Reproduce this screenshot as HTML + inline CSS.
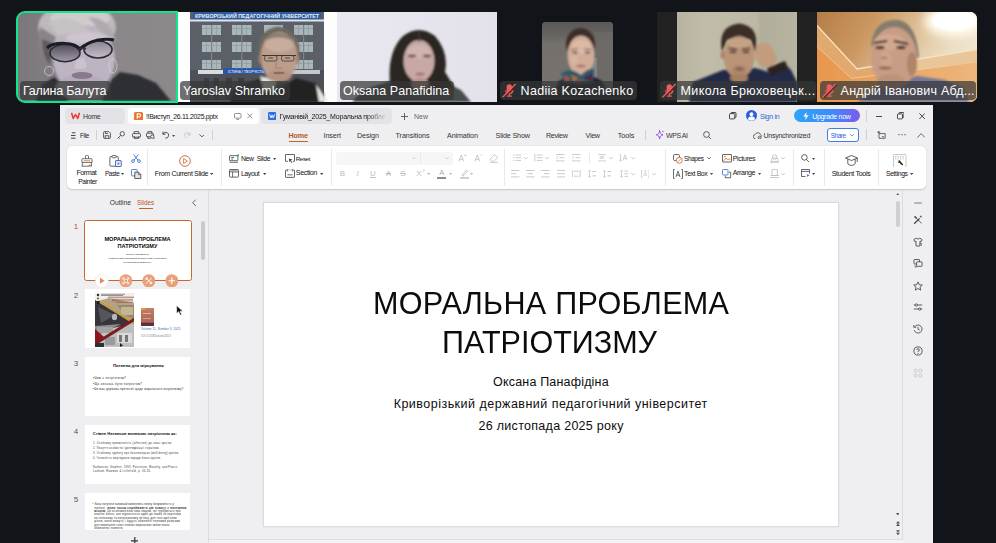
<!DOCTYPE html>
<html lang="uk">
<head>
<meta charset="utf-8">
<title>Zoom Meeting</title>
<style>
*{box-sizing:border-box;margin:0;padding:0}
html,body{width:996px;height:543px;overflow:hidden;background:#111418}
body{position:relative;font-family:"Liberation Sans",sans-serif;color:#222}
.abs{position:absolute}
/* video thumbs */
.thumb{position:absolute;top:12px;height:90px;width:160px;overflow:hidden}
.thumb svg{position:absolute;left:0;top:0;display:block}
.lbl{position:absolute;top:81px;height:19px;border-radius:4px;background:rgba(54,55,56,.72);color:#fff;font-size:12.5px;line-height:20.600px;white-space:nowrap;padding-left:3px}
.lbl.m{padding-left:20.600px}
.lbl svg{position:absolute;left:2px;top:1.800px}
/* window */
#win{position:absolute;left:60px;top:105px;width:873px;height:438px;background:#efeff1;overflow:hidden}
.t7{font-size:7.2px;color:#2b2b2b;white-space:nowrap;position:absolute;line-height:9px}
</style>
</head>
<body>
<!-- ===== video strip ===== -->
<div id="strip">
<!--T1s-->
<div class="abs" style="left:16px;top:11px;width:162px;height:92px;border:2px solid #0bea8a;border-radius:9px 0 0 9px;overflow:hidden;background:#858184">
<svg width="158" height="88" viewBox="0 0 158 88" style="display:block">
<defs>
<linearGradient id="g1bg" x1="0" x2="1"><stop offset="0" stop-color="#7b777c"/><stop offset=".5" stop-color="#8a8689"/><stop offset="1" stop-color="#8d898b"/></linearGradient>
<linearGradient id="g1l" x1="0" x2="0" y1="0" y2="1"><stop offset="0" stop-color="#4e4a56"/><stop offset="1" stop-color="#a49ca8"/></linearGradient>
<linearGradient id="g1r" x1="0" x2="0" y1="0" y2="1"><stop offset="0" stop-color="#8a8392"/><stop offset="1" stop-color="#c6bec8"/></linearGradient>
<filter id="b1" x="-20%" y="-20%" width="140%" height="140%"><feGaussianBlur stdDeviation="1.2"/></filter>
<filter id="b1s" x="-20%" y="-20%" width="140%" height="140%"><feGaussianBlur stdDeviation="0.55"/></filter>
</defs>
<rect width="158" height="88" fill="url(#g1bg)"/>
<g filter="url(#b1)">
<path d="M18 88 L24 72 L36 64 L46 72 L50 88Z" fill="#2b2b31"/>
<path d="M84 88 L94 66 L102 59 L120 62 L138 70 L153 88Z" fill="#2e2e35"/>
<ellipse cx="59" cy="14" rx="39" ry="25" fill="#bdb8ba"/>
<ellipse cx="62" cy="5" rx="30" ry="9" fill="#d0cccd"/>
<path d="M22 14 Q18 38 30 50 L38 24Z" fill="#8a838a"/>
<path d="M24 26 Q24 44 32 52 L34 30Z" fill="#5f595f"/>
<ellipse cx="66" cy="46" rx="31" ry="34" fill="#bdb4c2"/>
<ellipse cx="64" cy="74" rx="26" ry="12" fill="#b4aaba"/>
<ellipse cx="70" cy="25" rx="22" ry="6" fill="#cdc5d0"/>
<path d="M30 10 Q52 -2 72 18 Q60 22 40 22Z" fill="#c6c1c2"/>
<path d="M70 4 Q92 4 98 28 L84 20Z" fill="#b0aaae"/>
</g>
<g filter="url(#b1s)">
<ellipse cx="47" cy="40" rx="15" ry="8.700" fill="url(#g1l)" stroke="#2b2933" stroke-width="1.600"/>
<ellipse cx="80" cy="36.500" rx="14" ry="8.500" fill="url(#g1r)" stroke="#2b2933" stroke-width="1.600"/>
<path d="M29 35 Q34 30 47 30.500 Q58 31 62 36 Q68 30 80 27 Q90 25.500 96 27" fill="none" stroke="#1f1d27" stroke-width="3.200"/>
<path d="M60 37 Q64 34 68 36" fill="none" stroke="#34323c" stroke-width="1.600"/>
<path d="M59 46 L56 55 Q63 58 69 54 L66 45Z" fill="#cac2cf"/>
<ellipse cx="64" cy="62.500" rx="10.500" ry="3.400" fill="#88798f"/>
<circle cx="31" cy="58" r="4.500" fill="none" stroke="#d8d4dc" stroke-width=".7"/>
<ellipse cx="95" cy="53" rx="4" ry="7" fill="none" stroke="#d8d4dc" stroke-width=".7"/>
</g>
</svg>
</div>
<div class="lbl" style="left:20px;width:91px;letter-spacing:-.2px">Галина Балута</div>
<!--T1e-->
<!--T2s-->
<div class="thumb" style="left:178px;width:159px;background:#fdfdfd">
<svg width="159" height="90" viewBox="0 0 159 90">
<defs>
<filter id="b2" x="-20%" y="-20%" width="140%" height="140%"><feGaussianBlur stdDeviation="0.9"/></filter>
<filter id="b2s" x="-20%" y="-20%" width="140%" height="140%"><feGaussianBlur stdDeviation="0.45"/></filter>
</defs>
<rect x="12" y="0" width="134" height="90" fill="#5b5f67"/>
<rect x="12" y="58" width="134" height="32" fill="#4d5157"/>
<g filter="url(#b2s)" fill="#a9b7bb">
<rect x="24" y="13" width="19" height="10"/><rect x="54" y="13" width="19.500" height="10"/><rect x="86" y="13" width="19" height="8"/><rect x="116" y="13" width="19" height="10"/>
<rect x="24" y="30" width="19" height="10"/><rect x="54" y="30" width="19.500" height="10"/><rect x="116" y="30" width="19" height="10"/>
<rect x="24" y="48" width="19" height="9"/><rect x="54" y="48" width="19.500" height="9"/><rect x="116" y="48" width="19" height="9"/>
<rect x="20" y="58" width="25" height="4" fill="#d8dcde"/><rect x="100" y="58" width="42" height="4" fill="#c4c8cc"/>
<rect x="45" y="56" width="44" height="6" fill="#2b56a4"/>
<rect x="33" y="13" width="1.2" height="44" fill="#7d838a"/><rect x="63.200" y="13" width="1.200" height="44" fill="#7d838a"/><rect x="125" y="13" width="1.2" height="44" fill="#7d838a"/>
<path d="M24 16.5H43M28.5 13V23M38.5 13V23M24 33.5H43M28.5 30V40M38.5 30V40M24 51.5H43M28.5 48V57M38.5 48V57M54 16.5H73.5M58.5 13V23M68.5 13V23M54 33.5H73.5M58.5 30V40M68.5 30V40M54 51.5H73.5M58.5 48V57M68.5 48V57M116 16.5H135M120.5 13V23M130.5 13V23M116 33.5H135M120.5 30V40M130.5 30V40M116 51.5H135M120.5 48V57M130.5 48V57" stroke="#8d999e" stroke-width=".7" fill="none"/><g fill="#3a3d42"><rect x="26" y="66" width="5" height="22"/><rect x="36" y="66" width="5" height="22"/><rect x="48" y="66" width="6" height="22"/><rect x="60" y="66" width="6" height="22"/></g>
</g>
<rect x="15" y="0" width="128" height="7.5" fill="#2c5c9f"/>
<rect x="12" y="7.5" width="134" height="2" fill="#dfe6ee"/>
<text x="17" y="5.9" font-family="Liberation Sans,sans-serif" font-size="5.2" font-weight="700" fill="#e9eef6" textLength="124" lengthAdjust="spacingAndGlyphs">КРИВОРІЗЬКИЙ ПЕДАГОГІЧНИЙ УНІВЕРСИТЕТ</text>
<text x="50" y="60.8" font-family="Liberation Sans,sans-serif" font-size="3.2" font-weight="700" fill="#c9d6f0" textLength="36" lengthAdjust="spacingAndGlyphs">ІСТИНА І ТВОРЧІСТЬ</text>
<g filter="url(#b2)">
<path d="M52 90 L56 76 L84 66 L100 78 L118 66 L140 72 L146 82 L148 90Z" fill="#232323"/>
<path d="M82 64 L86 80 L96 76 L100 68Z" fill="#e2e0dc"/>
<path d="M138 72 L150 90 L141 90Z" fill="#e8e6e2"/>
<path d="M81 48 Q76 18 100 14.500 Q125 18 121 48 L117 34 Q100 24 85 34Z" fill="#6d685f"/>
<ellipse cx="101" cy="45" rx="18.500" ry="25" fill="#bb9d8c"/>
<ellipse cx="101" cy="33" rx="14" ry="7" fill="#c9ad9c"/>
<path d="M84 30 Q100 20 118 30 Q112 22 100 21 Q90 22 84 30Z" fill="#857e72"/>
<ellipse cx="82.500" cy="47" rx="2" ry="4.500" fill="#a4826f"/>
<ellipse cx="119.500" cy="47" rx="2" ry="4.500" fill="#a4826f"/>
<ellipse cx="101" cy="64" rx="12" ry="6" fill="#b3927f"/>
</g>
<g filter="url(#b2s)">
<path d="M84 43.500 L118 43.500" stroke="#3e352f" stroke-width="1"/>
<rect x="86.500" y="43.500" width="12.500" height="5.500" rx="2" fill="none" stroke="#3e352f" stroke-width=".8"/>
<rect x="103.500" y="43.500" width="12.500" height="5.500" rx="2" fill="none" stroke="#3e352f" stroke-width=".8"/>
<ellipse cx="92.500" cy="46" rx="3" ry="1" fill="#5a4a42" opacity=".6"/><ellipse cx="109.500" cy="46" rx="3" ry="1" fill="#5a4a42" opacity=".6"/>
<path d="M99 50 L97.500 56 H104" fill="none" stroke="#a07f6e" stroke-width=".8"/>
<ellipse cx="101" cy="61" rx="5.500" ry="1.200" fill="#8d6a5e"/>
</g>
</svg>
</div>
<div class="lbl" style="left:180px;width:110px;letter-spacing:0.05px">Yaroslav Shramko</div>
<!--T2e-->
<!--T3s-->
<div class="thumb" style="left:337px;background:#e6e4ee">
<svg width="160" height="90" viewBox="0 0 160 90">
<defs>
<filter id="b3" x="-20%" y="-20%" width="140%" height="140%"><feGaussianBlur stdDeviation="0.9"/></filter>
<linearGradient id="g3bg" x1="0" x2="1"><stop offset="0" stop-color="#e9e7f0"/><stop offset="1" stop-color="#e3e1ea"/></linearGradient>
</defs>
<rect width="160" height="90" fill="url(#g3bg)"/>
<g filter="url(#b3)">
<path d="M15 90 L26 78 L56 68 L104 68 L124 78 L134 90Z" fill="#464e48"/>
<path d="M53 72 Q50 40 66 24 Q82 12 98 24 Q112 40 108 60 L118 76 L88 82 L60 80 Z" fill="#2a2523"/>
<ellipse cx="82" cy="49" rx="15.5" ry="21" fill="#c7a8a6"/>
<ellipse cx="82" cy="40" rx="12" ry="7" fill="#d0b2ae"/>
<ellipse cx="83" cy="72" rx="9" ry="6" fill="#b8938e"/>
<path d="M82 18 L82 30" stroke="#4a3f3a" stroke-width="1"/>
</g>
<g filter="url(#b3)" opacity=".85">
<ellipse cx="75" cy="44" rx="4" ry="1.3" fill="#5a4644"/><ellipse cx="90" cy="44" rx="4" ry="1.3" fill="#5a4644"/>
<ellipse cx="83" cy="62" rx="4.5" ry="1.6" fill="#a06a6c"/>
</g>
</svg>
</div>
<div class="lbl" style="left:340px;width:114px;letter-spacing:0.04px">Oksana Panafidina</div>
<!--T3e-->
<!--T4s-->
<div class="abs" style="left:542px;top:22px;width:71px;height:71px;border-radius:4px;overflow:hidden;background:#6e6a66">
<svg width="71" height="71" viewBox="0 0 71 71" style="display:block">
<defs>
<filter id="b4" x="-20%" y="-20%" width="140%" height="140%"><feGaussianBlur stdDeviation="0.9"/></filter>
<linearGradient id="g4bg" x1="0" x2="0" y1="0" y2="1"><stop offset="0" stop-color="#595957"/><stop offset=".18" stop-color="#666461"/><stop offset=".3" stop-color="#74706b"/><stop offset="1" stop-color="#77726d"/></linearGradient>
</defs>
<rect width="71" height="71" fill="url(#g4bg)"/>
<rect x="52" y="10" width="19" height="61" fill="#6b6967" opacity=".8"/>
<rect x="50" y="36" width="5" height="20" fill="#8d8f96" opacity=".7"/>
<g filter="url(#b4)">
<path d="M12 71 L17 59 L30 53 L48 53 L60 59 L66 71Z" fill="#1f1f26"/>
<ellipse cx="38.500" cy="22" rx="14.500" ry="16" fill="#3d2f2a"/>
<ellipse cx="39" cy="33.500" rx="13.500" ry="20" fill="#d1ad98"/>
<ellipse cx="39" cy="25" rx="10" ry="7" fill="#dbb9a4"/>
<ellipse cx="32" cy="38" rx="4" ry="5" fill="#d8b5a0"/>
<path d="M19 52 Q28 44 39 53 Q48 45 52 47 L51 60 L38 62 L22 60Z" fill="#2d5a69"/>
<path d="M21 53 L28 56 L25 60Z" fill="#b8502a"/><path d="M41 56 L51 50 L50 60Z" fill="#4a2a48"/><path d="M29 53 L36 56 L32 60Z" fill="#b7702e"/><path d="M34 58 L42 58 L38 62Z" fill="#a03a2c"/>
</g>
<g filter="url(#b4)" opacity=".8">
<path d="M29 27.500L36 27M42 27L49 27.500" stroke="#5a4238" stroke-width=".9"/>
<ellipse cx="33" cy="30.500" rx="2.700" ry="1.100" fill="#4a4a52"/><ellipse cx="45.500" cy="30.500" rx="2.700" ry="1.100" fill="#4a4a52"/>
<ellipse cx="39" cy="44" rx="4.500" ry="1.300" fill="#a8605a"/>
</g>
</svg>
</div>
<div class="lbl m" style="left:500px;width:137px;letter-spacing:0.3px"><svg width="15" height="15" viewBox="0 0 15 15"><rect x="4.600" y="1.200" width="5.400" height="8.200" rx="2.700" fill="#ef5a5a"/><path d="M3.700 7.200a3.600 3.600 0 0 0 7.200 0M7.300 10.800v2M4.700 13.200h5.200" fill="none" stroke="#ef5a5a" stroke-width="1.300"/><path d="M1.700 15L14.800 1.700" stroke="#2b2d2e" stroke-width="1.200"/><path d="M.6 14.300L13.700 1" stroke="#ef5a5a" stroke-width="1.400"/></svg>Nadiia Kozachenko</div>
<!--T4e-->
<!--T5s-->
<div class="thumb" style="left:657px;background:#222">
<svg width="160" height="90" viewBox="0 0 160 90">
<defs>
<filter id="b5" x="-20%" y="-20%" width="140%" height="140%"><feGaussianBlur stdDeviation="1"/></filter>
<linearGradient id="g5bg" x1="0" x2="1"><stop offset="0" stop-color="#b7b3a1"/><stop offset=".25" stop-color="#c0bca9"/><stop offset=".66" stop-color="#bcb8a5"/><stop offset=".7" stop-color="#b2ae9c"/><stop offset="1" stop-color="#b7b3a1"/></linearGradient>
</defs>
<rect x="20" y="0" width="120" height="90" fill="url(#g5bg)"/>
<g filter="url(#b5)">
<path d="M32 90 L36 70 L66 58 L98 56 L118 62 L140 70 L140 90Z" fill="#202a47"/>
<path d="M110 58 L126 50 L134 58 L140 70 L118 66Z" fill="#202a47"/>
<path d="M98 34 Q108 28 114 34 L120 46 L116 56 L104 54 L98 46Z" fill="#c39b7d"/>
<path d="M110 56 L128 49 L131 56 L114 64Z" fill="#2b221d"/>
<path d="M65 40 Q60 14 82 11.500 Q104 14 98 40 L94 28 Q82 22 70 28Z" fill="#3b2f25"/>
<ellipse cx="82" cy="45" rx="15.500" ry="21" fill="#b99478"/>
<ellipse cx="82" cy="31" rx="11.500" ry="5" fill="#c6a285"/>
<ellipse cx="65.500" cy="43" rx="1.800" ry="4" fill="#a98268"/>
<ellipse cx="82" cy="66" rx="9" ry="5" fill="#a67f63"/>
<ellipse cx="82" cy="58" rx="8" ry="5" fill="#ac876c"/>
</g>
<g filter="url(#b5)" opacity=".8">
<path d="M72 36.500 L80 37.500M85 37.500 L93 36.500" stroke="#3a2c22" stroke-width="1.500"/>
<ellipse cx="76" cy="40" rx="3.500" ry="1.100" fill="#3f3026"/><ellipse cx="89" cy="40" rx="3.500" ry="1.100" fill="#3f3026"/>
<ellipse cx="82.500" cy="57" rx="4" ry="1.500" fill="#7f5446"/>
</g>
</svg>
</div>
<div class="lbl m" style="left:660px;width:156px;letter-spacing:.35px"><svg width="15" height="15" viewBox="0 0 15 15"><rect x="4.600" y="1.200" width="5.400" height="8.200" rx="2.700" fill="#ef5a5a"/><path d="M3.700 7.200a3.600 3.600 0 0 0 7.200 0M7.300 10.800v2M4.700 13.200h5.200" fill="none" stroke="#ef5a5a" stroke-width="1.300"/><path d="M1.700 15L14.800 1.700" stroke="#2b2d2e" stroke-width="1.200"/><path d="M.6 14.300L13.700 1" stroke="#ef5a5a" stroke-width="1.400"/></svg>Микола Брюховецьк...</div>
<!--T5e-->
<!--T6s-->
<div class="thumb" style="left:817px;border-radius:0 7px 7px 0;background:#d9a878">
<svg width="160" height="90" viewBox="0 0 160 90">
<defs>
<filter id="b6" x="-20%" y="-20%" width="140%" height="140%"><feGaussianBlur stdDeviation="1"/></filter>
<filter id="b6l" x="-50%" y="-50%" width="200%" height="200%"><feGaussianBlur stdDeviation="5"/></filter>
<linearGradient id="g6bg" x1="0" x2="1" y1="0" y2=".35"><stop offset="0" stop-color="#b47d47"/><stop offset=".35" stop-color="#cc9862"/><stop offset=".62" stop-color="#dfc099"/><stop offset=".85" stop-color="#eadcc0"/><stop offset="1" stop-color="#efe6d0"/></linearGradient>
<linearGradient id="g6w" x1="0" x2="1"><stop offset="0" stop-color="#e8974e"/><stop offset=".4" stop-color="#e9a45f"/><stop offset="1" stop-color="#ecb67c"/></linearGradient>
</defs>
<rect width="160" height="90" fill="url(#g6bg)"/>
<path d="M0 13.500 L40 57 L160 37.500 L160 90 L0 90Z" fill="#e2a96e"/>
<path d="M96 48 L160 37.500 L160 50 L96 59.500Z" fill="#e9c597"/>
<path d="M0 34.500 L34.500 66.500 L96 59.500 L160 50 L160 90 L0 90Z" fill="url(#g6w)"/>
<path d="M0 13.500 L40 57 L160 37.500" fill="none" stroke="#f6e2c2" stroke-width="1.300"/>
<path d="M0 34.500 L34.500 66.500 L160 50" fill="none" stroke="#f0c898" stroke-width=".9"/>
<ellipse cx="137" cy="9" rx="30" ry="16" fill="#fffaea" filter="url(#b6l)"/>
<ellipse cx="137" cy="8.500" rx="22" ry="10.500" fill="#ffffff" filter="url(#b6)"/>
<g filter="url(#b6)">
<path d="M40 90 L60 76 L100 64 L128 68 L146 76 L152 90Z" fill="#74779a"/>
<path d="M54 32 Q58 6 82 8 Q100 12 102 46 L94 42 Q90 18 72 18 Q60 20 56 36Z" fill="#857c6c"/>
<ellipse cx="77" cy="46" rx="23" ry="31" fill="#c79d86"/>
<ellipse cx="72" cy="30" rx="15" ry="8" fill="#d2a990"/>
<ellipse cx="69" cy="47" rx="6" ry="8" fill="#d0a48c"/>
<ellipse cx="95" cy="52" rx="5" ry="12" fill="#b1846c"/>
<ellipse cx="74" cy="70" rx="14" ry="8" fill="#bd927a"/>
</g>
<g filter="url(#b6)" opacity=".85">
<path d="M57 31 L70 29" stroke="#3c2e28" stroke-width="1.800"/><path d="M77 29 L91 32" stroke="#3c2e28" stroke-width="1.800"/>
<ellipse cx="63" cy="35.500" rx="4.500" ry="1.500" fill="#3e2e28"/><ellipse cx="84" cy="35.500" rx="4.500" ry="1.500" fill="#3e2e28"/>
<ellipse cx="68" cy="56" rx="6.500" ry="1.500" fill="#8a5c50"/>
<ellipse cx="67" cy="46" rx="3.500" ry="1.200" fill="#a87a68"/>
</g>
</svg>
</div>
<div class="lbl m" style="left:820px;width:156px;letter-spacing:.2px"><svg width="15" height="15" viewBox="0 0 15 15"><rect x="4.600" y="1.200" width="5.400" height="8.200" rx="2.700" fill="#ef5a5a"/><path d="M3.700 7.200a3.600 3.600 0 0 0 7.200 0M7.300 10.800v2M4.700 13.200h5.200" fill="none" stroke="#ef5a5a" stroke-width="1.300"/><path d="M1.700 15L14.800 1.700" stroke="#2b2d2e" stroke-width="1.200"/><path d="M.6 14.300L13.700 1" stroke="#ef5a5a" stroke-width="1.400"/></svg>Андрій Іванович Абд...</div>
<!--T6e-->

</div>
<!-- ===== shared window ===== -->
<div id="win">
<!--TABSs-->
<div class="abs" style="left:5.0px;top:3.0px;width:60px;height:16px;background:#e3e3e7;border-radius:4px"></div>
<svg class="abs" style="left:11.0px;top:7.0px;" width="9" height="8" viewBox="0 0 9 8"><path d="M.5 .8L2.300 6.500L4.500 2.500L6.700 6.500L8.500 .8" fill="none" stroke="#e8352e" stroke-width="1.500" stroke-linejoin="round"/></svg>
<span class="t7" style="left:23.0px;top:6.8px;font-size:7.0px;color:#333;letter-spacing:-0.358px;">Home</span>
<div class="abs" style="left:68.0px;top:3.0px;width:131px;height:15.6px;background:#ffffff;border-radius:4px"></div>
<svg class="abs" style="left:74.0px;top:6.5px;" width="9" height="8.5" viewBox="0 0 9 8.5"><rect width="9" height="8.500" rx="1.500" fill="#f0732a"/><path d="M3.200 6.800V1.900h1.900a1.500 1.500 0 0 1 0 3H3.200" fill="none" stroke="#fff" stroke-width="1.100"/></svg>
<span class="t7" style="left:86.0px;top:6.8px;font-size:6.99px;color:#161616;letter-spacing:-0.348px;">!!Виступ_26.11.2025.pptx</span>
<svg class="abs" style="left:174.0px;top:7.5px;" width="7.5" height="7" viewBox="0 0 7.5 7"><rect x=".5" y=".5" width="6.500" height="4.600" rx=".8" fill="none" stroke="#777" stroke-width=".8"/><path d="M2.500 6.500h2.500" stroke="#777" stroke-width=".8"/></svg>
<svg class="abs" style="left:187.0px;top:8.3px;" width="5.6" height="5.6" viewBox="0 0 5.6 5.6"><path d="M.4 .4L5.200 5.200M5.200 .4L.4 5.200" stroke="#777" stroke-width=".8"/></svg>
<div class="abs" style="left:201.0px;top:3.0px;width:131px;height:16px;background:#e3e3e7;border-radius:4px"></div>
<svg class="abs" style="left:207.7px;top:6.7px;" width="8.2" height="8.2" viewBox="0 0 8.2 8.2"><rect width="8.200" height="8.200" rx="1.400" fill="#2f6fe4"/><path d="M1.600 2.300L2.900 6L4.100 3L5.300 6L6.600 2.300" fill="none" stroke="#fff" stroke-width=".9" stroke-linejoin="round"/></svg>
<span class="t7" style="left:219.6px;top:6.6px;font-size:7.0px;color:#161616;letter-spacing:-0.196px;width:107px;overflow:hidden;-webkit-mask-image:linear-gradient(90deg,#000 82%,transparent 100%);mask-image:linear-gradient(90deg,#000 82%,transparent 100%);">Гуманівій_2025_Моральна пробле</span>
<svg class="abs" style="left:340.5px;top:7.5px;" width="7" height="7" viewBox="0 0 7 7"><path d="M3.500 0V7M0 3.500H7" stroke="#555" stroke-width=".9"/></svg>
<span class="t7" style="left:354.0px;top:6.8px;font-size:7.0px;color:#666;letter-spacing:-0.002px;">New</span>
<svg class="abs" style="left:669.0px;top:7.4px;" width="7.5" height="7.5" viewBox="0 0 7.5 7.5"><rect x=".5" y="1.600" width="5.300" height="5.300" rx=".8" fill="none" stroke="#333" stroke-width=".9"/><path d="M1.900 1.600V1.200a.7 .7 0 0 1 .7-.7h3.700a.7 .7 0 0 1 .7 .7v3.700a.7 .7 0 0 1-.7 .7H5.800" fill="none" stroke="#333" stroke-width=".9"/></svg>
<svg class="abs" style="left:686.0px;top:5.3px;" width="11" height="11" viewBox="0 0 11 11"><circle cx="5.500" cy="5.500" r="5.500" fill="#2b5fd9"/><circle cx="5.500" cy="4.200" r="1.900" fill="#fff"/><path d="M1.900 9.200a3.700 3.700 0 0 1 7.200 0a5.400 5.400 0 0 1-7.200 0z" fill="#fff"/></svg>
<span class="t7" style="left:700.0px;top:6.8px;font-size:7.0px;color:#2e63d6;letter-spacing:-0.301px;">Sign in</span>
<div class="abs" style="left:734.0px;top:4.0px;width:66px;height:13px;background:linear-gradient(90deg,#2fa4fb 0%,#3d8cf8 55%,#7a5cf0 100%);border-radius:6.5px"></div>
<svg class="abs" style="left:743.0px;top:6.5px;" width="6" height="8" viewBox="0 0 6 8"><path d="M3.600 0L.3 4.600H2.700L2.100 8L5.700 3.200H3.200Z" fill="#fff"/></svg>
<span class="t7" style="left:752.2px;top:6.8px;font-size:7.0px;color:#ffffff;letter-spacing:-0.304px;">Upgrade now</span>
<div class="abs" style="left:805.5px;top:5.0px;width:1px;height:12px;background:#d4d4d8;"></div>
<svg class="abs" style="left:815.5px;top:10.5px;" width="6" height="1" viewBox="0 0 6 1"><path d="M0 .5H6" stroke="#333" stroke-width=".9"/></svg>
<svg class="abs" style="left:837.0px;top:7.3px;" width="7.4" height="7.4" viewBox="0 0 7.4 7.4"><rect x=".5" y="1.900" width="5" height="5" rx=".7" fill="none" stroke="#333" stroke-width=".9"/><path d="M2 1.900V1.200a.7 .7 0 0 1 .7-.7h3.500a.7 .7 0 0 1 .7 .7v3.500a.7 .7 0 0 1-.7 .7H5.500" fill="none" stroke="#333" stroke-width=".9"/></svg>
<svg class="abs" style="left:859.0px;top:8.0px;" width="6.4" height="6.4" viewBox="0 0 6.4 6.4"><path d="M.4 .4L6 6M6 .4L.4 6" stroke="#333" stroke-width=".9"/></svg>
<!--TABSe-->
<!--MENUs-->
<svg class="abs" style="left:11.0px;top:26.5px;" width="5" height="7" viewBox="0 0 5 7"><path d="M.8 .8H4.500M0 3.500H4.500M0 6.200H4.500" stroke="#333" stroke-width=".9"/></svg>
<span class="t7" style="left:20.1px;top:25.8px;font-size:6.34px;color:#222;letter-spacing:-0.339px;">File</span>
<div class="abs" style="left:36.0px;top:25.0px;width:1px;height:10px;background:#d0d0d4;"></div>
<svg class="abs" style="left:43.0px;top:26.0px;" width="8" height="8" viewBox="0 0 8 8"><path d="M.6 1.400a.8 .8 0 0 1 .8-.8H5.800L7.400 2.200V6.600a.8 .8 0 0 1-.8 .8H1.400a.8 .8 0 0 1-.8-.8Z" fill="none" stroke="#3a3a3a" stroke-width=".8"/><path d="M2.200 7.400V4.700H5.800V7.400M2.400 .7V2.500H5" fill="none" stroke="#3a3a3a" stroke-width=".8"/></svg>
<svg class="abs" style="left:57.0px;top:26.0px;" width="8" height="8" viewBox="0 0 8 8"><circle cx="5.300" cy="2.800" r="2.200" fill="none" stroke="#3a3a3a" stroke-width=".8"/><path d="M3.700 4.400L.6 7.500M1.500 6.600L2.600 7.600" fill="none" stroke="#3a3a3a" stroke-width=".8"/></svg>
<svg class="abs" style="left:71.5px;top:26.0px;" width="9" height="8" viewBox="0 0 9 8"><rect x=".5" y="2.600" width="8" height="3.600" rx=".8" fill="none" stroke="#3a3a3a" stroke-width=".8"/><path d="M2.200 2.600V.6H6.800V2.600M2.200 5V7.400H6.800V5" fill="none" stroke="#3a3a3a" stroke-width=".8"/></svg>
<svg class="abs" style="left:85.5px;top:26.0px;" width="9" height="8" viewBox="0 0 9 8"><rect x=".5" y="2.200" width="6.800" height="3.600" rx=".8" fill="none" stroke="#3a3a3a" stroke-width=".8"/><path d="M1.900 2.200V.6H5.900V2.200M1.900 5V7.400H4.500" fill="none" stroke="#3a3a3a" stroke-width=".8"/><circle cx="6.300" cy="5.600" r="1.700" fill="#efeff1" stroke="#3a3a3a" stroke-width=".8"/><path d="M7.500 6.800L8.600 7.900" stroke="#3a3a3a" stroke-width=".8"/></svg>
<svg class="abs" style="left:101.5px;top:26.3px;" width="7" height="7.5" viewBox="0 0 7 7.5"><path d="M1 .6L.9 3.300L3.600 3.100" fill="none" stroke="#3a3a3a" stroke-width=".85"/><path d="M1.100 3.100A2.900 2.900 0 1 1 3.300 7.100" fill="none" stroke="#3a3a3a" stroke-width=".85"/></svg>
<svg class="abs" style="left:112.4px;top:29.5px;" width="3.2" height="2" viewBox="0 0 3.2 2"><path d="M0 0H3.200L1.600 2Z" fill="#555"/></svg>
<svg class="abs" style="left:123.5px;top:26.8px;" width="7" height="6.5" viewBox="0 0 7 6.5"><path d="M6 .6L6.100 3.100L3.600 2.900" fill="none" stroke="#c4c4c8" stroke-width=".85"/><path d="M5.900 2.900A2.700 2.700 0 1 0 3.800 6" fill="none" stroke="#c4c4c8" stroke-width=".85"/></svg>
<svg class="abs" style="left:138.6px;top:29.0px;" width="5.8" height="3.4" viewBox="0 0 5.8 3.4"><path d="M.4 .4L2.900 2.900L5.400 .4" fill="none" stroke="#444" stroke-width=".85"/></svg>
<div class="abs" style="left:152.0px;top:25.0px;width:1px;height:10px;background:#d0d0d4;"></div>
<span class="t7" style="left:228.6px;top:25.8px;font-size:7.2px;color:#b5562a;letter-spacing:-0.201px;font-weight:700;">Home</span>
<div class="abs" style="left:228.6px;top:36.3px;width:19.6px;height:1.2px;background:#c4622f;"></div>
<span class="t7" style="left:263.6px;top:25.8px;font-size:7.2px;color:#333;letter-spacing:-0.121px;">Insert</span>
<span class="t7" style="left:297.0px;top:25.8px;font-size:7.2px;color:#333;letter-spacing:-0.083px;">Design</span>
<span class="t7" style="left:335.6px;top:25.8px;font-size:7.2px;color:#333;letter-spacing:-0.095px;">Transitions</span>
<span class="t7" style="left:387.0px;top:25.8px;font-size:7.2px;color:#333;letter-spacing:-0.127px;">Animation</span>
<span class="t7" style="left:435.6px;top:25.8px;font-size:7.2px;color:#333;letter-spacing:-0.180px;">Slide Show</span>
<span class="t7" style="left:486.0px;top:25.8px;font-size:7.2px;color:#333;letter-spacing:-0.322px;">Review</span>
<span class="t7" style="left:525.6px;top:25.8px;font-size:7.2px;color:#333;letter-spacing:-0.359px;">View</span>
<span class="t7" style="left:557.7px;top:25.8px;font-size:7.2px;color:#333;letter-spacing:-0.027px;">Tools</span>
<div class="abs" style="left:585.3px;top:25.0px;width:1px;height:10px;background:#d0d0d4;"></div>
<svg class="abs" style="left:595.5px;top:25.2px;" width="8.5" height="9.5" viewBox="0 0 8.5 9.5"><path d="M3.600 .5C3.900 3.300 4.700 4.300 7 4.800C4.700 5.300 3.900 6.300 3.600 9C3.300 6.300 2.500 5.300 .3 4.800C2.500 4.300 3.300 3.300 3.600 .5Z" fill="none" stroke="#8a3fe0" stroke-width=".9" stroke-linejoin="round"/><path d="M6.900 .4L7.200 1.300L8.100 1.600L7.200 1.900L6.900 2.800L6.600 1.900L5.700 1.600L6.600 1.300Z" fill="#d64bd0"/></svg>
<span class="t7" style="left:606.0px;top:25.8px;font-size:7.0px;color:#333;letter-spacing:-0.424px;">WPS AI</span>
<svg class="abs" style="left:642.5px;top:25.8px;" width="8.5" height="8.5" viewBox="0 0 8.5 8.5"><circle cx="3.500" cy="3.500" r="2.900" fill="none" stroke="#444" stroke-width=".85"/><path d="M5.600 5.600L8.200 8.200" stroke="#444" stroke-width=".85"/></svg>
<svg class="abs" style="left:692.5px;top:26.5px;" width="9.5" height="7.5" viewBox="0 0 9.5 7.5"><path d="M2.400 6.600A2 2 0 0 1 2.200 2.600A2.800 2.800 0 0 1 7.600 2.900A1.700 1.700 0 0 1 8.800 4.500" fill="none" stroke="#444" stroke-width=".8"/><circle cx="6.600" cy="5.600" r="1.500" fill="none" stroke="#444" stroke-width=".8"/><path d="M5.600 6.600L7.600 4.600" stroke="#444" stroke-width=".6"/></svg>
<span class="t7" style="left:703.5px;top:25.8px;font-size:7.0px;color:#333;letter-spacing:-0.261px;">Unsynchronized</span>
<div class="abs" style="left:767.0px;top:23.0px;width:31.5px;height:14px;background:#fff;border:1px solid #3f7de0;border-radius:3px"></div>
<span class="t7" style="left:770.7px;top:25.8px;font-size:6.45px;color:#2e63d6;letter-spacing:-0.428px;">Share</span>
<svg class="abs" style="left:790.3px;top:29.1px;" width="4" height="2.6" viewBox="0 0 4 2.6"><path d="M.3 .3L2 2.100L3.700 .3" fill="none" stroke="#4a78d8" stroke-width=".8"/></svg>
<div class="abs" style="left:806.0px;top:24.0px;width:1px;height:11px;background:#d0d0d4;"></div>
<svg class="abs" style="left:817.0px;top:26.0px;" width="9.5" height="8" viewBox="0 0 9.5 8"><path d="M2 2.600H8.200V7.300H2Z" fill="none" stroke="#444" stroke-width=".8"/><path d="M.3 1.200H3.200M1.700 0V2.500M5 5.700H7" stroke="#444" stroke-width=".8"/></svg>
<svg class="abs" style="left:837.5px;top:29.4px;" width="8" height="1.4" viewBox="0 0 8 1.4"><circle cx=".9" cy=".7" r=".65" fill="#444"/><circle cx="4" cy=".7" r=".65" fill="#444"/><circle cx="7.100" cy=".7" r=".65" fill="#444"/></svg>
<svg class="abs" style="left:857.0px;top:27.5px;" width="8.4" height="5" viewBox="0 0 8.4 5"><path d="M.4 4.600L4.200 .6L8 4.600" fill="none" stroke="#555" stroke-width=".85"/></svg>
<!--MENUe-->
<!--RIBBONs-->
<div class="abs" style="left:7.0px;top:41.0px;width:859px;height:43px;background:#ffffff;border-radius:5px;box-shadow:0 .5px 1.500px rgba(0,0,0,.18)"></div>
<div class="abs" style="left:86.8px;top:44.0px;width:1px;height:37px;background:#e9e9ec;"></div>
<div class="abs" style="left:161.2px;top:44.0px;width:1px;height:37px;background:#e9e9ec;"></div>
<div class="abs" style="left:271.0px;top:44.0px;width:1px;height:37px;background:#e9e9ec;"></div>
<div class="abs" style="left:444.2px;top:44.0px;width:1px;height:37px;background:#e9e9ec;"></div>
<div class="abs" style="left:605.3px;top:44.0px;width:1px;height:37px;background:#e9e9ec;"></div>
<div class="abs" style="left:733.0px;top:44.0px;width:1px;height:37px;background:#e9e9ec;"></div>
<div class="abs" style="left:764.4px;top:44.0px;width:1px;height:37px;background:#e9e9ec;"></div>
<div class="abs" style="left:818.2px;top:44.0px;width:1px;height:37px;background:#e9e9ec;"></div>
<div class="abs" style="left:528.8px;top:48.0px;width:1px;height:10px;background:#e6e6ea;"></div>
<svg class="abs" style="left:21.0px;top:49.5px;" width="12" height="12" viewBox="0 0 12 12"><path d="M4.500 3.600V1.300a.8 .8 0 0 1 .8-.8h1.400a.8 .8 0 0 1 .8 .8v2.300" fill="none" stroke="#4a4a4a" stroke-width=".8"/><path d="M1.600 3.700H10.400a.7 .7 0 0 1 .7 .7V7.400H.9V4.400a.7 .7 0 0 1 .7-.7Z" fill="none" stroke="#4a4a4a" stroke-width=".8"/><path d="M1.600 7.400L1 11.200H8.200L8.600 9.800L9.200 11.200H10.400L10.400 7.400" fill="none" stroke="#4a4a4a" stroke-width=".8" stroke-linejoin="round"/><path d="M2.800 5.700H9.200" stroke="#e0703a" stroke-width=".8"/></svg>
<span class="t7" style="left:16.4px;top:64.3px;font-size:7.16px;color:#141414;letter-spacing:-0.455px;">Format</span>
<span class="t7" style="left:18.2px;top:72.3px;font-size:6.73px;color:#141414;letter-spacing:-0.354px;">Painter</span>
<svg class="abs" style="left:48.5px;top:49.5px;" width="13" height="12" viewBox="0 0 13 12"><rect x=".9" y="1.600" width="8.400" height="9.600" rx=".8" fill="none" stroke="#4a4a4a" stroke-width=".85"/><rect x="3" y=".5" width="4.200" height="2.200" rx=".5" fill="#fff" stroke="#4a4a4a" stroke-width=".8"/><rect x="6.600" y="5.600" width="5.600" height="6" rx=".4" fill="#fff" stroke="#3d5fc4" stroke-width="1"/><rect x="8.200" y="7.200" width="2.400" height="2.800" fill="#9aa4c8"/></svg>
<span class="t7" style="left:45.0px;top:64.3px;font-size:6.43px;color:#141414;letter-spacing:-0.411px;">Paste</span>
<svg class="abs" style="left:61.4px;top:68.3px;" width="3.2" height="2" viewBox="0 0 3.2 2"><path d="M0 0H3.200L1.600 2Z" fill="#444"/></svg>
<svg class="abs" style="left:71.0px;top:48.5px;" width="10" height="9" viewBox="0 0 10 9"><path d="M2.600 .4L7.200 6.400M7.400 .4L2.800 6.400" stroke="#3a6fd8" stroke-width=".85"/><circle cx="2" cy="7.100" r="1.400" fill="none" stroke="#3a6fd8" stroke-width=".85"/><circle cx="8" cy="7.100" r="1.400" fill="none" stroke="#3a6fd8" stroke-width=".85"/></svg>
<svg class="abs" style="left:71.0px;top:63.5px;" width="10.5" height="10" viewBox="0 0 10.5 10"><rect x=".5" y=".5" width="5.600" height="6.400" rx=".7" fill="none" stroke="#3a6fd8" stroke-width=".85"/><path d="M3.800 3.200H7.600L9.800 5.400V9.500H3.800Z" fill="#e4e4e4" stroke="#444" stroke-width=".85" stroke-linejoin="round"/><path d="M7.400 3.400V5.600H9.600" fill="none" stroke="#444" stroke-width=".7"/></svg>
<svg class="abs" style="left:118.5px;top:49.5px;" width="12" height="12" viewBox="0 0 12 12"><circle cx="6" cy="6" r="5.300" fill="none" stroke="#b3643a" stroke-width=".9"/><path d="M4.600 3.500L8.400 6L4.600 8.500Z" fill="none" stroke="#e8703a" stroke-width=".9" stroke-linejoin="round"/></svg>
<span class="t7" style="left:94.8px;top:64.3px;font-size:7.06px;color:#141414;letter-spacing:-0.349px;">From Current Slide</span>
<svg class="abs" style="left:149.9px;top:68.3px;" width="3.2" height="2" viewBox="0 0 3.2 2"><path d="M0 0H3.200L1.600 2Z" fill="#444"/></svg>
<svg class="abs" style="left:168.5px;top:48.5px;" width="10.5" height="9" viewBox="0 0 10.5 9"><rect x=".5" y="1.700" width="8.400" height="5" rx=".5" fill="none" stroke="#4a4a4a" stroke-width=".85"/><path d="M.5 8.300H9M2.200 3.500H5M2.200 5H4" stroke="#4a4a4a" stroke-width=".8"/><circle cx="9" cy="1.300" r="1.100" fill="#2fae6a"/></svg>
<span class="t7" style="left:180.9px;top:48.9px;font-size:6.9px;color:#141414;letter-spacing:-0.365px;">New&nbsp; Slide</span>
<svg class="abs" style="left:213.4px;top:52.9px;" width="3.2" height="2" viewBox="0 0 3.2 2"><path d="M0 0H3.200L1.600 2Z" fill="#444"/></svg>
<svg class="abs" style="left:168.5px;top:63.8px;" width="10.5" height="9" viewBox="0 0 10.5 9"><rect x=".5" y=".5" width="9" height="7.600" rx=".7" fill="none" stroke="#4a4a4a" stroke-width=".85"/><path d="M.5 2.900H9.500M3.600 2.900V8" stroke="#4a4a4a" stroke-width=".8"/><path d="M1.300 1.700H8.500" stroke="#4a4a4a" stroke-width=".5"/></svg>
<span class="t7" style="left:180.9px;top:64.3px;font-size:6.99px;color:#141414;letter-spacing:-0.417px;">Layout</span>
<svg class="abs" style="left:203.1px;top:68.3px;" width="3.2" height="2" viewBox="0 0 3.2 2"><path d="M0 0H3.200L1.600 2Z" fill="#444"/></svg>
<svg class="abs" style="left:224.5px;top:48.5px;" width="10.5" height="9.5" viewBox="0 0 10.5 9.5"><path d="M3 7.300H.5V.5H9.500V7.300H7.800" fill="none" stroke="#4a4a4a" stroke-width=".85"/><path d="M3.900 4.400L7.400 5.600L5.900 6.400L7.400 8.600L6.700 9.100L5.200 6.900L4.200 8Z" fill="#4a4a4a"/></svg>
<span class="t7" style="left:235.8px;top:48.9px;font-size:6.21px;color:#141414;letter-spacing:-0.406px;">Reset</span>
<svg class="abs" style="left:224.5px;top:63.8px;" width="10.5" height="9" viewBox="0 0 10.5 9"><rect x=".5" y="1.200" width="9" height="7.200" rx=".5" fill="none" stroke="#4a4a4a" stroke-width=".85"/><path d="M2.600 0V2.400M7.400 0V2.400M2.400 5.800H7.600" stroke="#4a4a4a" stroke-width=".8"/><path d="M2.600 1.200H7.400" stroke="#fff" stroke-width="1.100"/></svg>
<span class="t7" style="left:235.8px;top:64.3px;font-size:7.13px;color:#141414;letter-spacing:-0.397px;">Section</span>
<svg class="abs" style="left:259.9px;top:68.3px;" width="3.2" height="2" viewBox="0 0 3.2 2"><path d="M0 0H3.200L1.600 2Z" fill="#444"/></svg>
<div class="abs" style="left:276.0px;top:46.5px;width:117px;height:13px;background:#f6f6f8;border-radius:3px"></div>
<div class="abs" style="left:359.5px;top:47.5px;width:0.8px;height:11px;background:#e9e9ec;"></div>
<svg class="abs" style="left:351.8px;top:51.8px;" width="4" height="2.6" viewBox="0 0 4 2.6"><path d="M.3 .3L2 2.100L3.700 .3" fill="none" stroke="#c6c6ca" stroke-width=".8"/></svg>
<svg class="abs" style="left:384.8px;top:51.8px;" width="4" height="2.6" viewBox="0 0 4 2.6"><path d="M.3 .3L2 2.100L3.700 .3" fill="none" stroke="#c6c6ca" stroke-width=".8"/></svg>
<svg class="abs" style="left:398.0px;top:49.0px;" width="9" height="8" viewBox="0 0 9 8"><path d="M.8 7.500L3.300 1L5.800 7.500M1.700 5.300H4.900" fill="none" stroke="#bdbdc2" stroke-width=".8"/><path d="M6.400 1.300H8.400M7.400 .3V2.300" stroke="#bdbdc2" stroke-width=".6"/></svg>
<svg class="abs" style="left:413.5px;top:49.0px;" width="9" height="8" viewBox="0 0 9 8"><path d="M.8 7.500L3.300 1L5.800 7.500M1.700 5.300H4.900" fill="none" stroke="#bdbdc2" stroke-width=".8"/><path d="M6.400 1.100H8.400" stroke="#bdbdc2" stroke-width=".6"/></svg>
<svg class="abs" style="left:429.0px;top:48.8px;" width="9.5" height="9" viewBox="0 0 9.5 9"><path d="M5.500 .6L8.800 3.600L4.800 7.300H3L.9 5.300Z" fill="none" stroke="#bdbdc2" stroke-width=".8" stroke-linejoin="round"/><path d="M1.300 8.400H8.800" stroke="#bdbdc2" stroke-width=".8"/></svg>
<span class="t7" style="left:277.5px;top:63.9px;width:10px;text-align:center;font-size:8px;color:#bdbdc2;font-weight:400">B</span>
<span class="t7" style="left:292.5px;top:63.9px;width:10px;text-align:center;font-size:8px;color:#bdbdc2;font-style:italic">I</span>
<span class="t7" style="left:308.0px;top:63.9px;width:10px;text-align:center;font-size:8px;color:#bdbdc2;text-decoration:underline">U</span>
<span class="t7" style="left:323.3px;top:63.9px;width:10px;text-align:center;font-size:8px;color:#bdbdc2;text-decoration:line-through">A</span>
<span class="t7" style="left:338.0px;top:63.9px;width:10px;text-align:center;font-size:8px;color:#bdbdc2;text-decoration:line-through">S</span>
<span class="t7" style="left:354.0px;top:63.9px;width:10px;text-align:center;font-size:8px;color:#bdbdc2;">X</span>
<span class="t7" style="left:358.5px;top:61.3px;width:10px;text-align:center;font-size:4px;color:#bdbdc2;">2</span>
<svg class="abs" style="left:366.9px;top:68.3px;" width="3.2" height="2" viewBox="0 0 3.2 2"><path d="M0 0H3.200L1.600 2Z" fill="#bdbdc2"/></svg>
<span class="t7" style="left:376.8px;top:62.6px;width:10px;text-align:center;font-size:7.5px;color:#bdbdc2;color:#adadb2">A</span>
<div class="abs" style="left:377.3px;top:71.6px;width:9px;height:2.2px;background:#8c8c92;"></div>
<svg class="abs" style="left:389.0px;top:68.3px;" width="3.2" height="2" viewBox="0 0 3.2 2"><path d="M0 0H3.200L1.600 2Z" fill="#bdbdc2"/></svg>
<svg class="abs" style="left:399.5px;top:63.5px;" width="9" height="9.5" viewBox="0 0 9 9.5"><path d="M2.400 5.800L6.400 1L7.600 2L3.800 6.600Z" fill="none" stroke="#bdbdc2" stroke-width=".8"/><path d="M1.600 6.200L3.600 7.200" stroke="#bdbdc2" stroke-width=".8"/></svg><div class="abs" style="left:399.5px;top:71.8px;width:9px;height:2px;background:#d0d0d4;"></div>
<svg class="abs" style="left:410.4px;top:68.3px;" width="3.2" height="2" viewBox="0 0 3.2 2"><path d="M0 0H3.200L1.600 2Z" fill="#bdbdc2"/></svg>
<svg class="abs" style="left:452.6px;top:49.3px;" width="8.5" height="7.4" viewBox="0 0 8.5 7.4"><path d="M2.600 1H8.500M2.600 3.700H8.500M2.600 6.400H8.500" stroke="#bdbdc2" stroke-width=".8"/><path d="M.2 1H1.300M.2 3.700H1.300M.2 6.400H1.300" stroke="#bdbdc2" stroke-width=".9"/></svg>
<svg class="abs" style="left:463.5px;top:51.8px;" width="4" height="2.6" viewBox="0 0 4 2.6"><path d="M.3 .3L2 2.100L3.700 .3" fill="none" stroke="#bdbdc2" stroke-width=".8"/></svg>
<svg class="abs" style="left:474.4px;top:49.3px;" width="8.5" height="7.4" viewBox="0 0 8.5 7.4"><path d="M2.800 1H8.500M2.800 3.700H8.500M2.800 6.400H8.500" stroke="#bdbdc2" stroke-width=".8"/><path d="M.8 0V7.400" stroke="#bdbdc2" stroke-width=".8"/></svg>
<svg class="abs" style="left:485.0px;top:51.8px;" width="4" height="2.6" viewBox="0 0 4 2.6"><path d="M.3 .3L2 2.100L3.700 .3" fill="none" stroke="#bdbdc2" stroke-width=".8"/></svg>
<svg class="abs" style="left:496.4px;top:49.3px;" width="8.5" height="7.4" viewBox="0 0 8.5 7.4"><path d="M0 .5H8.500M3.500 3.700H8.500M0 6.900H8.500" stroke="#bdbdc2" stroke-width=".8"/><path d="M2 2.400L.5 3.700L2 5" fill="none" stroke="#bdbdc2" stroke-width=".7"/></svg>
<svg class="abs" style="left:512.0px;top:49.3px;" width="8.5" height="7.4" viewBox="0 0 8.5 7.4"><path d="M0 .5H8.500M3.500 3.700H8.500M0 6.900H8.500" stroke="#bdbdc2" stroke-width=".8"/><path d="M.5 2.400L2 3.700L.5 5" fill="none" stroke="#bdbdc2" stroke-width=".7"/></svg>
<svg class="abs" style="left:537.5px;top:49.3px;" width="8.5" height="7.4" viewBox="0 0 8.5 7.4"><path d="M0 .5H8.500M0 6.900H8.500" stroke="#bdbdc2" stroke-width=".7"/></svg>
<span class="t7" style="left:536.7px;top:47.8px;width:10px;text-align:center;font-size:4.6px;color:#bdbdc2;">ab</span>
<svg class="abs" style="left:548.5px;top:51.8px;" width="4" height="2.6" viewBox="0 0 4 2.6"><path d="M.3 .3L2 2.100L3.700 .3" fill="none" stroke="#bdbdc2" stroke-width=".8"/></svg>
<svg class="abs" style="left:558.8px;top:49.3px;" width="8.5" height="7.4" viewBox="0 0 8.5 7.4"><path d="M1.500 0V7M.2 5.700L1.500 7.200L2.800 5.700" fill="none" stroke="#bdbdc2" stroke-width=".7"/><path d="M3.800 6.500L6 .8L8.200 6.500M4.600 4.500H7.400" fill="none" stroke="#bdbdc2" stroke-width=".7"/></svg>
<svg class="abs" style="left:570.5px;top:51.8px;" width="4" height="2.6" viewBox="0 0 4 2.6"><path d="M.3 .3L2 2.100L3.700 .3" fill="none" stroke="#bdbdc2" stroke-width=".8"/></svg>
<svg class="abs" style="left:451.2px;top:65.3px;" width="8.5" height="7.4" viewBox="0 0 8.5 7.4"><path d="M0 .5H8.500M0 3.700H5.500M0 6.900H8.500" stroke="#bdbdc2" stroke-width=".8"/></svg>
<svg class="abs" style="left:466.2px;top:65.3px;" width="8.5" height="7.4" viewBox="0 0 8.5 7.4"><path d="M0 .5H8.500M1.500 3.700H7M0 6.900H8.500" stroke="#bdbdc2" stroke-width=".8"/></svg>
<svg class="abs" style="left:481.4px;top:65.3px;" width="8.5" height="7.4" viewBox="0 0 8.5 7.4"><path d="M0 .5H8.500M3 3.700H8.500M0 6.900H8.500" stroke="#bdbdc2" stroke-width=".8"/></svg>
<svg class="abs" style="left:496.8px;top:65.3px;" width="8.5" height="7.4" viewBox="0 0 8.5 7.4"><path d="M0 .5H8.500M0 3.700H8.500M0 6.900H8.500" stroke="#bdbdc2" stroke-width=".8"/></svg>
<svg class="abs" style="left:512.0px;top:65.3px;" width="8.5" height="7.4" viewBox="0 0 8.5 7.4"><path d="M.4 0V7.400M8.100 0V7.400M2 1.200H6.500M2 6.200H6.500" stroke="#bdbdc2" stroke-width=".8"/></svg>
<svg class="abs" style="left:527.8px;top:65.3px;" width="8.5" height="7.4" viewBox="0 0 8.5 7.4"><path d="M1.500 0V7.400M.2 1.500L1.500 .2L2.800 1.500M.2 5.900L1.500 7.200L2.800 5.900" fill="none" stroke="#bdbdc2" stroke-width=".7"/><path d="M4.500 1.500H8.500M4.500 5.900H8.500" stroke="#bdbdc2" stroke-width=".9"/></svg>
<svg class="abs" style="left:542.8px;top:65.3px;" width="8.5" height="7.4" viewBox="0 0 8.5 7.4"><path d="M1.500 0V7.400M.2 1.500L1.500 .2L2.800 1.500M.2 5.900L1.500 7.200L2.800 5.900" fill="none" stroke="#bdbdc2" stroke-width=".7"/><path d="M4.500 1.500H8.500M4.500 5.900H8.500" stroke="#bdbdc2" stroke-width=".9"/></svg>
<svg class="abs" style="left:559.5px;top:65.3px;" width="8.5" height="7.4" viewBox="0 0 8.5 7.4"><path d="M1.500 0V7.400M.2 1.500L1.500 .2L2.800 1.500M.2 5.900L1.500 7.200L2.800 5.900" fill="none" stroke="#bdbdc2" stroke-width=".7"/><path d="M4.500 1H8.500M4.500 3.700H8.500M4.500 6.400H8.500" stroke="#bdbdc2" stroke-width=".8"/></svg>
<svg class="abs" style="left:570.5px;top:67.8px;" width="4" height="2.6" viewBox="0 0 4 2.6"><path d="M.3 .3L2 2.100L3.700 .3" fill="none" stroke="#bdbdc2" stroke-width=".8"/></svg>
<svg class="abs" style="left:580.8px;top:65.3px;" width="8.5" height="7.4" viewBox="0 0 8.5 7.4"><path d="M1.500 0H.4V7.400H1.500M7 0H8.100V7.400H7" fill="none" stroke="#bdbdc2" stroke-width=".7"/><path d="M2.500 3.700H6M2.500 5.300H6M4.200 .6V2.400M3.300 1.500L4.200 .6L5.100 1.500" fill="none" stroke="#bdbdc2" stroke-width=".7"/></svg>
<svg class="abs" style="left:592.0px;top:67.8px;" width="4" height="2.6" viewBox="0 0 4 2.6"><path d="M.3 .3L2 2.100L3.700 .3" fill="none" stroke="#bdbdc2" stroke-width=".8"/></svg>
<svg class="abs" style="left:613.0px;top:48.5px;" width="10" height="10" viewBox="0 0 10 10"><rect x=".5" y=".5" width="6" height="6" rx="1.200" fill="none" stroke="#4a4a4a" stroke-width=".85"/><circle cx="6.300" cy="6.300" r="3" fill="#fff" stroke="#c9673a" stroke-width=".85"/><path d="M4.600 7.800L8 4.800" stroke="#c9673a" stroke-width=".6"/></svg>
<span class="t7" style="left:624.1px;top:48.9px;font-size:6.49px;color:#141414;letter-spacing:-0.442px;">Shapes</span>
<svg class="abs" style="left:646.5px;top:51.8px;" width="4" height="2.6" viewBox="0 0 4 2.6"><path d="M.3 .3L2 2.100L3.700 .3" fill="none" stroke="#444" stroke-width=".8"/></svg>
<svg class="abs" style="left:612.8px;top:63.5px;" width="10" height="10" viewBox="0 0 10 10"><path d="M1.800 .5H.5V9.500H1.800M8.200 .5H9.500V9.500H8.200" fill="none" stroke="#4a4a4a" stroke-width=".8"/><path d="M3 8L5 2.200L7 8M3.600 6.200H6.400" fill="none" stroke="#4a4a4a" stroke-width=".8"/><circle cx=".6" cy="5" r=".5" fill="#3a6fd8"/><circle cx="9.400" cy="5" r=".5" fill="#3a6fd8"/></svg>
<span class="t7" style="left:624.1px;top:64.3px;font-size:6.84px;color:#141414;letter-spacing:-0.376px;">Text Box</span>
<svg class="abs" style="left:650.4px;top:68.3px;" width="3.2" height="2" viewBox="0 0 3.2 2"><path d="M0 0H3.200L1.600 2Z" fill="#444"/></svg>
<svg class="abs" style="left:661.5px;top:49.0px;" width="10" height="8.5" viewBox="0 0 10 8.5"><rect x=".5" y=".5" width="9" height="7.500" rx=".5" fill="none" stroke="#4a4a4a" stroke-width=".85"/><path d="M1.200 7.300L4 4L5.800 6L7.200 4.600L9 6.600" fill="none" stroke="#d8683a" stroke-width=".8"/><circle cx="3" cy="2.600" r=".8" fill="#d8683a"/></svg>
<span class="t7" style="left:672.8px;top:48.9px;font-size:7.01px;color:#141414;letter-spacing:-0.360px;">Pictures</span>
<svg class="abs" style="left:661.5px;top:63.5px;" width="10" height="10" viewBox="0 0 10 10"><rect x=".5" y=".5" width="5.500" height="5.500" rx=".8" fill="#fff" stroke="#3a6fd8" stroke-width=".85"/><path d="M3.200 8.700H8.700V3.200" fill="none" stroke="#4a4a4a" stroke-width=".85"/><path d="M3.200 6.800V8.700M7 3.200H8.700" stroke="#4a4a4a" stroke-width=".85"/></svg>
<span class="t7" style="left:672.8px;top:64.3px;font-size:7.12px;color:#141414;letter-spacing:-0.422px;">Arrange</span>
<svg class="abs" style="left:698.4px;top:68.3px;" width="3.2" height="2" viewBox="0 0 3.2 2"><path d="M0 0H3.200L1.600 2Z" fill="#444"/></svg>
<svg class="abs" style="left:710.0px;top:48.5px;" width="9.5" height="10" viewBox="0 0 9.5 10"><circle cx="4.700" cy="3" r="2.300" fill="none" stroke="#bdbdc2" stroke-width=".8"/><path d="M1 7.400A3.700 3.700 0 0 1 8.400 7.400Z" fill="none" stroke="#bdbdc2" stroke-width=".8"/></svg><div class="abs" style="left:710.0px;top:56.8px;width:9px;height:1.6px;background:#d2d2d6;"></div>
<svg class="abs" style="left:721.0px;top:51.8px;" width="4" height="2.6" viewBox="0 0 4 2.6"><path d="M.3 .3L2 2.100L3.700 .3" fill="none" stroke="#bdbdc2" stroke-width=".8"/></svg>
<svg class="abs" style="left:710.0px;top:63.5px;" width="9.5" height="8" viewBox="0 0 9.5 8"><path d="M2 .5H7.400V6.500H2Z" fill="none" stroke="#bdbdc2" stroke-width=".8"/><path d="M.5 6.500H9" stroke="#bdbdc2" stroke-width=".8"/></svg><div class="abs" style="left:710.0px;top:71.8px;width:9px;height:1.6px;background:#c8c8cc;"></div>
<svg class="abs" style="left:721.0px;top:67.8px;" width="4" height="2.6" viewBox="0 0 4 2.6"><path d="M.3 .3L2 2.100L3.700 .3" fill="none" stroke="#bdbdc2" stroke-width=".8"/></svg>
<svg class="abs" style="left:741.0px;top:48.8px;" width="8.5" height="8.5" viewBox="0 0 8.5 8.5"><circle cx="3.400" cy="3.400" r="2.800" fill="none" stroke="#444" stroke-width=".85"/><path d="M5.400 5.400L8.200 8.200" stroke="#444" stroke-width=".85"/></svg>
<svg class="abs" style="left:752.4px;top:52.9px;" width="3.2" height="2" viewBox="0 0 3.2 2"><path d="M0 0H3.200L1.600 2Z" fill="#444"/></svg>
<svg class="abs" style="left:740.5px;top:64.0px;" width="9.5" height="8.5" viewBox="0 0 9.5 8.5"><path d="M.5 .5H8.500V4.500M.5 .5V7.500H4.500M.5 2.400H8.500" fill="none" stroke="#444" stroke-width=".8"/><path d="M5.600 5.300L8.800 6.300L7.300 6.900L6.700 8.300Z" fill="#3a6fd8"/></svg>
<svg class="abs" style="left:752.4px;top:68.3px;" width="3.2" height="2" viewBox="0 0 3.2 2"><path d="M0 0H3.200L1.600 2Z" fill="#444"/></svg>
<svg class="abs" style="left:785.0px;top:49.8px;" width="13" height="11" viewBox="0 0 13 11"><path d="M.5 3L6.500 .5L12.500 3L6.500 5.500Z" fill="none" stroke="#444" stroke-width=".85" stroke-linejoin="round"/><path d="M2.800 4.200V8.200C2.800 9.500 4.500 10.300 6.500 10.300C8.500 10.300 10.200 9.500 10.200 8.200V4.200" fill="none" stroke="#444" stroke-width=".85"/><path d="M12.200 3.200V7" stroke="#444" stroke-width=".85"/></svg>
<span class="t7" style="left:771.7px;top:64.3px;font-size:7.19px;color:#141414;letter-spacing:-0.362px;">Student Tools</span>
<svg class="abs" style="left:833.0px;top:48.5px;" width="13.5" height="13.5" viewBox="0 0 13.5 13.5"><rect x=".5" y=".5" width="12.500" height="12.500" rx=".6" fill="none" stroke="#b8b8bc" stroke-width=".8"/><rect x="2.600" y="2.400" width="3" height="2.600" fill="none" stroke="#c8c8cc" stroke-width=".6"/><rect x="7.600" y="2.400" width="3" height="2.600" fill="none" stroke="#c8c8cc" stroke-width=".6"/><path d="M5.200 6.400A1.900 1.900 0 0 1 7.600 7.600L10.200 10.600L9.200 11.600L6.400 8.800A1.900 1.900 0 0 1 4.400 7.400L5.600 7.800L6 7Z" fill="#222"/><rect x="1.500" y="11.800" width="10.500" height="1.500" fill="#fff"/></svg>
<span class="t7" style="left:826.0px;top:64.3px;font-size:6.77px;color:#141414;letter-spacing:-0.352px;">Settings</span>
<svg class="abs" style="left:849.9px;top:68.3px;" width="3.2" height="2" viewBox="0 0 3.2 2"><path d="M0 0H3.200L1.600 2Z" fill="#444"/></svg>
<!--RIBBONe-->
<!--PANELs-->
<div class="abs" style="left:148.0px;top:84.5px;width:1px;height:354px;background:#dcdce0;"></div>
<span class="t7" style="left:49.7px;top:93.3px;font-size:6.72px;color:#333;">Outline</span>
<span class="t7" style="left:77.0px;top:93.3px;font-size:6.3px;color:#b5562a;">Slides</span>
<div class="abs" style="left:79.0px;top:102.6px;width:13.5px;height:1.1px;background:#c4622f;"></div>
<svg class="abs" style="left:131.5px;top:94.0px;" width="4.5" height="7.5" viewBox="0 0 4.5 7.5"><path d="M3.900 .5L.7 3.750L3.900 7" fill="none" stroke="#555" stroke-width=".9"/></svg>
<div class="abs" style="left:141.3px;top:115.5px;width:3.5px;height:39.5px;background:#c9c9cd;border-radius:2px"></div>
<span class="t7" style="left:12px;top:117px;width:8px;text-align:center;font-size:8px;color:#b5562a">1</span>
<span class="t7" style="left:12px;top:185.5px;width:8px;text-align:center;font-size:8px;color:#555">2</span>
<span class="t7" style="left:12px;top:253.5px;width:8px;text-align:center;font-size:8px;color:#555">3</span>
<span class="t7" style="left:12px;top:321.5px;width:8px;text-align:center;font-size:8px;color:#555">4</span>
<span class="t7" style="left:12px;top:389.5px;width:8px;text-align:center;font-size:8px;color:#555">5</span>
<div class="abs" style="left:24px;top:114.69999999999999px;width:108px;height:61.5px;background:#fff;border:1.500px solid #c9652f;border-radius:2.500px;overflow:hidden"><div class="abs" style="left:0;top:15.6px;width:105px;text-align:center;font-size:5.6px;line-height:6.900px;font-weight:700;color:#0a0a0a;letter-spacing:0px">МОРАЛЬНА ПРОБЛЕМА<br>ПАТРІОТИЗМУ</div><div class="abs" style="left:0;top:32.600px;width:105px;text-align:center;font-size:2.500px;line-height:4.050px;color:#1a1a1a;letter-spacing:0px">Оксана Панафідіна<br>Криворізький державний педагогічний університет<br>26 листопада 2025 року</div></div>
<svg class="abs" style="left:35.2px;top:168.6px;" width="13.6" height="13.6" viewBox="0 0 13.6 13.6"><circle cx="6.800" cy="6.800" r="6.500" fill="#ffffff"/><circle cx="6.800" cy="6.800" r="6.600" fill="none" stroke="#e6e0dc" stroke-width=".6"/><path d="M5 3.800L9.600 6.800L5 9.800Z" fill="#e8875a"/></svg>
<svg class="abs" style="left:58.8px;top:168.6px;" width="13.6" height="13.6" viewBox="0 0 13.6 13.6"><circle cx="6.800" cy="6.800" r="6.500" fill="#e9a078"/><path d="M3.800 5.600V3.800H5.600M8 3.800H9.800V5.600M9.800 8V9.800H8M5.600 9.800H3.800V8" fill="none" stroke="#fff" stroke-width=".9"/><rect x="5.200" y="5.200" width="3.200" height="3.200" fill="none" stroke="#fff" stroke-width=".7"/></svg>
<svg class="abs" style="left:81.6px;top:168.6px;" width="13.6" height="13.6" viewBox="0 0 13.6 13.6"><circle cx="6.800" cy="6.800" r="6.500" fill="#e9a078"/><path d="M4 4L9.600 9.600M9.600 4L4 9.600" stroke="#fff" stroke-width=".9"/><path d="M4 6V4H6M7.600 9.600H9.600V7.600" fill="none" stroke="#fff" stroke-width=".9"/></svg>
<svg class="abs" style="left:104.7px;top:168.6px;" width="13.6" height="13.6" viewBox="0 0 13.6 13.6"><circle cx="6.800" cy="6.800" r="6.500" fill="#e9a078"/><path d="M6.800 3.600V10M3.600 6.800H10" stroke="#fff" stroke-width="1.100"/></svg>
<div class="abs" style="left:25px;top:184px;width:105px;height:59px;background:#fff;overflow:hidden;"><svg class="abs" style="left:9.900px;top:3.700px" width="39.500" height="54" viewBox="0 0 39.500 54"><defs><filter id="bp"><feGaussianBlur stdDeviation=".45"/></filter></defs><rect width="39.500" height="54" fill="#c9c4bc"/><g filter="url(#bp)"><rect x="0" y="0" width="39.500" height="12" fill="#f2efea"/><path d="M5 7.500L39.500 30V10L14 5Z" fill="#b3a283"/><path d="M22 12H39.500V27L30 22Z" fill="#9a8a6c"/><path d="M26 14H38V22H26Z" fill="#c4b594"/><path d="M0 7L38 30.500L0 39Z" fill="#35353a"/><path d="M3 14L20 22L6 30Z" fill="#55555c"/><ellipse cx="19.500" cy="24" rx="2.600" ry="3.200" fill="#b9b9bb"/><path d="M0 33L26 31L0 44Z" fill="#8b8b8b"/><path d="M2 34H18V40H2Z" fill="#a2a2a2"/><path d="M0 50L39.500 26V54H0Z" fill="#bdbdbd"/><path d="M22 40H37V50H22Z" fill="#d9d9d9"/><path d="M10 44H20V52H10Z" fill="#9a9a9a"/><path d="M24 42H27V49H24ZM30 42H33V49H30Z" fill="#777"/><path d="M4.500 7.300L39.500 29.500V31.800L3 8.600Z" fill="#c39a2e"/><path d="M35 27L39.500 26V32Z" fill="#d1a027"/><path d="M0 49L39.500 24.500V28L0 52.500Z" fill="#7b1b20"/><path d="M0 36L9 44L0 51Z" fill="#8a181d"/><path d="M0 50H9V54H0Z" fill="#2f2f33"/><path d="M25 50L28 52.500L25 54Z" fill="#222"/><path d="M6 1.300H30M6 2.500H28" stroke="#555" stroke-width=".6"/><path d="M13 4.200H39" stroke="#7a1f24" stroke-width=".6"/><path d="M17 6.300H38M17 7.800H38M21 9.300H38" stroke="#8a4a3a" stroke-width=".6"/></g><circle cx="3" cy="2" r="1.200" fill="#2a2a2a"/><circle cx="3" cy="5.500" r=".9" fill="#444"/><rect x="2" y="8" width="2.600" height="3" fill="#222"/></svg><div class="abs" style="left:56px;top:19px;width:13px;height:17.500px;background:linear-gradient(#c4866a 0%,#bd7762 18%,#b06656 78%,#5c2a3a 86%,#6a3244 100%)"><div class="abs" style="left:0;top:0;width:4px;height:1.500px;background:#d9a040"></div><div class="abs" style="left:2px;top:5px;width:8px;height:6px;border-top:.6px solid rgba(240,210,195,.7);border-bottom:.6px solid rgba(235,200,185,.6)"></div></div><span class="abs" style="left:56px;top:38.67px;font-size:3.05px;line-height:3.66px;color:#3a6aa8;font-weight:400;white-space:nowrap;letter-spacing:0.073px;">Volume 11, Number 3, 2025</span><span class="abs" style="left:56px;top:46.24px;font-size:2.6px;line-height:3.12px;color:#8a8a8a;font-weight:400;white-space:nowrap;letter-spacing:-0.188px;">DOI: 10.31392/cult.alm.2025.3</span></div>
<svg class="abs" style="left:115.5px;top:199.5px;" width="8" height="11" viewBox="0 0 8 11"><path d="M.6 .5V8.600L2.700 6.700L4.200 10.200L5.600 9.600L4.100 6.200H6.900Z" fill="#111" stroke="#fff" stroke-width=".6"/></svg>
<div class="abs" style="left:25px;top:252px;width:105px;height:59px;background:#fff;overflow:hidden;"><span class="abs" style="left:28px;top:5.51px;font-size:4.15px;line-height:4.98px;color:#111;font-weight:700;white-space:nowrap;letter-spacing:0.005px;">Питання для міркування</span><span class="abs" style="left:8px;top:19.86px;font-size:2.9px;line-height:3.48px;color:#222;font-weight:400;white-space:nowrap;letter-spacing:0.424px;">•Чим є патріотизм?</span><span class="abs" style="left:8px;top:25.96px;font-size:2.9px;line-height:3.48px;color:#222;font-weight:400;white-space:nowrap;letter-spacing:0.377px;">•Що означає бути патріотом?</span><span class="abs" style="left:8px;top:31.06px;font-size:2.9px;line-height:3.48px;color:#222;font-weight:400;white-space:nowrap;letter-spacing:0.222px;">•Чи має держава претензії щодо морального патріотизму?</span></div>
<div class="abs" style="left:25px;top:320px;width:105px;height:59px;background:#fff;overflow:hidden;"><span class="abs" style="left:7.7px;top:6.73px;font-size:4.12px;line-height:4.94px;color:#111;font-weight:700;white-space:nowrap;letter-spacing:-0.001px;">Стівен Натансон визначає патріотизм як:</span><span class="abs" style="left:8px;top:16.64px;font-size:2.6px;line-height:3.12px;color:#2a2a2a;font-weight:400;white-space:nowrap;letter-spacing:0.307px;">1. Особливу прихильність (affection) до своєї країни.</span><span class="abs" style="left:8px;top:22.14px;font-size:2.6px;line-height:3.12px;color:#2a2a2a;font-weight:400;white-space:nowrap;letter-spacing:0.276px;">2. Почуття особистої ідентифікації з країною.</span><span class="abs" style="left:8px;top:27.14px;font-size:2.6px;line-height:3.12px;color:#2a2a2a;font-weight:400;white-space:nowrap;letter-spacing:0.284px;">3. Особливу турботу про благополуччя (well-being) країни.</span><span class="abs" style="left:8px;top:32.14px;font-size:2.6px;line-height:3.12px;color:#2a2a2a;font-weight:400;white-space:nowrap;letter-spacing:0.283px;">4. Готовність жертвувати заради блага країни.</span><span class="abs" style="left:8px;top:41.44px;font-size:2.6px;line-height:3.12px;color:#333;font-weight:400;white-space:nowrap;letter-spacing:0.283px;">Nathanson, Stephen. 1993. Patriotism, Morality, and Peace.</span><span class="abs" style="left:8px;top:45.24px;font-size:2.6px;line-height:3.12px;color:#333;font-weight:400;white-space:nowrap;letter-spacing:0.309px;">Lanham: Rowman &amp; Littlefield, p. 34-35.</span></div>
<div class="abs" style="left:25px;top:388px;width:105px;height:37px;background:#fff;overflow:hidden;"><span class="abs" style="left:7.4px;top:10.43px;font-size:2.78px;line-height:3.34px;color:#2a2a2a;font-weight:400;white-space:nowrap;letter-spacing:0.134px;">• Хоча патріоти зазвичай виявляють певну безумовність у</span><span class="abs" style="left:9.3px;top:13.78px;font-size:2.78px;line-height:3.34px;color:#2a2a2a;font-weight:400;white-space:nowrap;letter-spacing:0.342px;">любові, <b>вони також сприймають цю повагу з належним</b></span><span class="abs" style="left:9.3px;top:17.13px;font-size:2.78px;line-height:3.34px;color:#2a2a2a;font-weight:400;white-space:nowrap;letter-spacing:0.211px;"><b>місцем</b>. Це особливо властиво людям, які турбуються про</span><span class="abs" style="left:9.3px;top:20.48px;font-size:2.78px;line-height:3.34px;color:#2a2a2a;font-weight:400;white-space:nowrap;letter-spacing:0.230px;">власне благо, але відносяться один до інших як партнери</span><span class="abs" style="left:9.3px;top:23.83px;font-size:2.78px;line-height:3.34px;color:#2a2a2a;font-weight:400;white-space:nowrap;letter-spacing:0.151px;">по спільному та патріотичному зв’язку, для того щоб вони</span><span class="abs" style="left:9.3px;top:27.18px;font-size:2.78px;line-height:3.34px;color:#2a2a2a;font-weight:400;white-space:nowrap;letter-spacing:0.270px;">діяли, вони можуть і будуть обмежені певними рамками</span><span class="abs" style="left:9.3px;top:30.53px;font-size:2.78px;line-height:3.34px;color:#2a2a2a;font-weight:400;white-space:nowrap;letter-spacing:0.179px;">для виконання своїх певних моральних зобов’язань</span><span class="abs" style="left:9.3px;top:33.88px;font-size:2.78px;line-height:3.34px;color:#2a2a2a;font-weight:400;white-space:nowrap;letter-spacing:0.195px;">обмеженої повноти.</span></div>
<svg class="abs" style="left:70.5px;top:431.5px;" width="7.6" height="7" viewBox="0 0 7.6 7"><path d="M3.800 0V7M0 3.900H7.600" stroke="#333" stroke-width="1.200"/></svg>
<!--PANELe-->
<!--MAINs-->
<div class="abs" style="left:148.5px;top:434.0px;width:694px;height:4px;background:#f3f3f5;border-top:1px solid #dedee2"></div>
<div class="abs" style="left:203px;top:97px;width:576px;height:325px;background:#fff;border:1px solid #dcdce0;box-shadow:0 0 2px rgba(0,0,0,.07)"></div>
<div class="abs" style="left:313.0px;top:180.13px;font-size:32px;line-height:normal;letter-spacing:0.297px;white-space:nowrap;color:#0c0c0c;transform:scaleX(0.955);transform-origin:0 0;">МОРАЛЬНА ПРОБЛЕМА</div>
<div class="abs" style="left:382.4px;top:218.63px;font-size:32px;line-height:normal;letter-spacing:-0.025px;white-space:nowrap;color:#0c0c0c;transform:scaleX(0.955);transform-origin:0 0;">ПАТРІОТИЗМУ</div>
<div class="abs" style="left:433.1px;top:269.79px;font-size:12.5px;line-height:normal;letter-spacing:0.179px;white-space:nowrap;color:#0c0c0c;">Оксана Панафідіна</div>
<div class="abs" style="left:333.7px;top:291.69px;font-size:12.5px;line-height:normal;letter-spacing:0.477px;white-space:nowrap;color:#0c0c0c;">Криворізький державний педагогічний університет</div>
<div class="abs" style="left:418.5px;top:313.69px;font-size:12.5px;line-height:normal;letter-spacing:0.289px;white-space:nowrap;color:#0c0c0c;">26 листопада 2025 року</div>
<!--MAINe-->
<!--SIDEs-->
<div class="abs" style="left:842.3px;top:84.5px;width:1px;height:350px;background:#dcdce0;"></div>
<svg class="abs" style="left:835.8px;top:87.5px;" width="3.6" height="2.6" viewBox="0 0 3.6 2.6"><path d="M0 2.600L1.800 0L3.600 2.600Z" fill="#555"/></svg>
<div class="abs" style="left:835.6px;top:95.8px;width:4px;height:25.8px;background:#cfcfd3;border-radius:2px"></div>
<svg class="abs" style="left:835.7px;top:408.3px;" width="3.6" height="2.6" viewBox="0 0 3.6 2.6"><path d="M0 0H3.600L1.800 2.600Z" fill="#555"/></svg>
<svg class="abs" style="left:835.5px;top:416.2px;" width="4" height="5.4" viewBox="0 0 4 5.4"><path d="M0 2.400L2 0L4 2.400ZM0 5L2 2.600L4 5Z" fill="#555"/></svg>
<svg class="abs" style="left:835.5px;top:424.5px;" width="4" height="5.4" viewBox="0 0 4 5.4"><path d="M0 .2H4L2 2.600ZM0 2.800H4L2 5.200Z" fill="#555"/></svg>
<svg class="abs" style="left:852.7px;top:92.6px;" width="10" height="10" viewBox="0 0 10 10"><path d="M1.200 5H8.800" stroke="#555" stroke-width=".75"/></svg>
<svg class="abs" style="left:852.7px;top:109.8px;" width="10" height="10" viewBox="0 0 10 10"><path d="M1.200 8.800L6.600 3.400" stroke="#444" stroke-width="1.300"/><path d="M2.400 2.200L8.600 8.400" stroke="#444" stroke-width=".9"/><path d="M1.600 1.400L3.400 3.200" stroke="#444" stroke-width="1.500"/><path d="M7.800 .6V2.600M6.800 1.600H8.800" stroke="#444" stroke-width=".7"/></svg>
<svg class="abs" style="left:852.7px;top:131.7px;" width="10" height="10" viewBox="0 0 10 10"><path d="M3.300 1L.8 2.700L1.900 4.700L3 4.100V9H7V4.100L8.100 4.700L9.200 2.700L6.700 1C6.300 2.300 3.700 2.300 3.300 1Z" fill="none" stroke="#444" stroke-width=".85" stroke-linejoin="round"/><path d="M6.200 6.600H8.400V8.800" fill="none" stroke="#444" stroke-width=".7"/></svg>
<svg class="abs" style="left:852.7px;top:153.0px;" width="10" height="10" viewBox="0 0 10 10"><rect x="1" y="1.500" width="5.500" height="4.500" rx=".5" fill="none" stroke="#444" stroke-width=".85"/><rect x="3.600" y="3.800" width="5.500" height="4.500" rx=".5" fill="#efeff1" stroke="#444" stroke-width=".85"/><path d="M2 7.500V9H4" fill="none" stroke="#444" stroke-width=".7"/></svg>
<svg class="abs" style="left:852.7px;top:175.6px;" width="10" height="10" viewBox="0 0 10 10"><path d="M5 .9L6.300 3.700L9.300 4L7 6.100L7.700 9.100L5 7.500L2.300 9.100L3 6.100L.7 4L3.700 3.700Z" fill="none" stroke="#444" stroke-width=".85" stroke-linejoin="round"/></svg>
<svg class="abs" style="left:852.7px;top:197.2px;" width="10" height="10" viewBox="0 0 10 10"><path d="M.8 3H9.200M.8 7H9.200" stroke="#444" stroke-width=".85"/><circle cx="3.300" cy="3" r="1.200" fill="#efeff1" stroke="#444" stroke-width=".8"/><circle cx="6.700" cy="7" r="1.200" fill="#efeff1" stroke="#444" stroke-width=".8"/></svg>
<svg class="abs" style="left:852.7px;top:218.5px;" width="10" height="10" viewBox="0 0 10 10"><path d="M1.600 3A4 4 0 1 1 1.200 6.200" fill="none" stroke="#444" stroke-width=".85"/><path d="M.8 1V3.300H3.100" fill="none" stroke="#444" stroke-width=".8"/><path d="M5 2.800V5.200L6.800 6.200" fill="none" stroke="#444" stroke-width=".8"/></svg>
<svg class="abs" style="left:852.7px;top:240.7px;" width="10" height="10" viewBox="0 0 10 10"><circle cx="5" cy="5" r="4.100" fill="none" stroke="#444" stroke-width=".85"/><path d="M3.700 4A1.300 1.300 0 1 1 5 5.300V6.200" fill="none" stroke="#444" stroke-width=".8"/><circle cx="5" cy="7.500" r=".5" fill="#444"/></svg>
<svg class="abs" style="left:852.7px;top:263.0px;" width="10" height="10" viewBox="0 0 10 10"><rect x="1.200" y="1.200" width="2.800" height="2.800" rx=".8" fill="none" stroke="#c4c4c8" stroke-width=".8"/><rect x="6" y="1.200" width="2.800" height="2.800" rx=".8" fill="none" stroke="#c4c4c8" stroke-width=".8"/><rect x="1.200" y="6" width="2.800" height="2.800" rx=".8" fill="none" stroke="#c4c4c8" stroke-width=".8"/><rect x="6" y="6" width="2.800" height="2.800" rx=".8" fill="none" stroke="#c4c4c8" stroke-width=".8"/></svg>
<!--SIDEe-->
</div>
</body>
</html>
